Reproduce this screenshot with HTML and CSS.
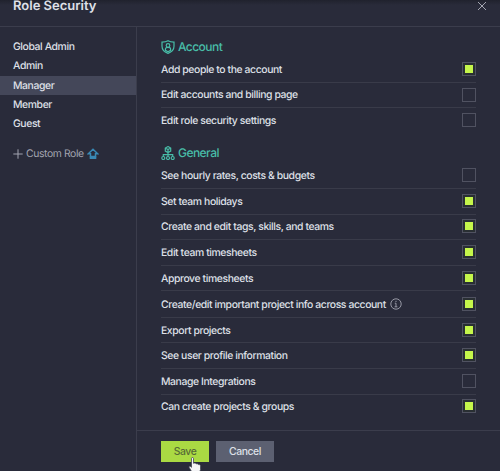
FILE: index.html
```
<!DOCTYPE html>
<html lang="en">
<head>
<meta charset="utf-8">
<title>Role Security</title>
<link rel="stylesheet" href="styles.css">
</head>
<body>
<div class="dialog">
  <header class="header">
    <h1>Role Security</h1>
    <svg class="close" viewBox="0 0 10 10"><path d="M1 1l8 8M9 1l-8 8"/></svg>
  </header>
  <div class="body">
    <nav class="sidebar">
      <div class="role">Global Admin</div>
      <div class="role">Admin</div>
      <div class="role selected">Manager</div>
      <div class="role">Member</div>
      <div class="role">Guest</div>
      <div class="custom">
        <svg class="plus" viewBox="0 0 10 10"><path d="M5 .3v9.400M.3 5h9.400"/></svg>
        <span>Custom Role</span>
        <svg class="upgrade" viewBox="0 0 12 12"><path d="M6 1.200L1.300 5.700h2.200v2.800h5V5.700h2.200z"/><path class="bar" d="M2.700 8.200h6.600V11H2.700z"/></svg>
      </div>
    </nav>
    <main class="main">
      <div class="content">
        <h2>
          <svg viewBox="0 0 14 14"><path d="M7 .8C5.200 1.800 3.200 2.100 1 2.100v4.200c0 3.300 2.400 5.800 6 7.100 3.600-1.300 6-3.800 6-7.100V2.100C10.800 2.100 8.800 1.800 7 .8z"/><circle cx="7" cy="5.500" r="1.800"/><path d="M4.400 10.300V9c0-2.200 5.200-2.200 5.200 0v1.300L7 11.700z"/></svg>
          <span>Account</span>
        </h2>
        <section>
          <div class="row"><span>Add people to the account</span><i class="box on"></i></div>
          <div class="row"><span>Edit accounts and billing page</span><i class="box"></i></div>
          <div class="row"><span>Edit role security settings</span><i class="box"></i></div>
        </section>
        <h2 class="general">
          <svg viewBox="0 0 14 14"><path d="M7 .6l2.700 1.500v3L7 6.600 4.300 5.100v-3zM4.300 2.100L7 3.600l2.700-1.500M7 3.600v7M2.300 10.500V8.700h9.400v1.800"/><circle cx="2.300" cy="12" r="1.500"/><circle cx="7" cy="12" r="1.500"/><circle cx="11.700" cy="12" r="1.500"/></svg>
          <span>General</span>
        </h2>
        <section>
          <div class="row"><span>See hourly rates, costs &amp; budgets</span><i class="box"></i></div>
          <div class="row"><span>Set team holidays</span><i class="box on"></i></div>
          <div class="row"><span>Create and edit tags, skills, and teams</span><i class="box on"></i></div>
          <div class="row"><span>Edit team timesheets</span><i class="box on"></i></div>
          <div class="row"><span>Approve timesheets</span><i class="box on"></i></div>
          <div class="row tall"><span>Create/edit important project info across account</span><svg class="info" viewBox="0 0 12 12"><circle cx="6" cy="6" r="5.200"/><path d="M4.800 5.200H6v3.600M4.600 8.800h2.800M6 2.800v1.200"/></svg><i class="box on"></i></div>
          <div class="row"><span>Export projects</span><i class="box on"></i></div>
          <div class="row"><span>See user profile information</span><i class="box on"></i></div>
          <div class="row"><span>Manage Integrations</span><i class="box"></i></div>
          <div class="row"><span>Can create projects &amp; groups</span><i class="box on"></i></div>
        </section>
      </div>
      <footer class="footer">
        <button class="save">Save</button>
        <button class="cancel">Cancel</button>
      </footer>
    </main>
  </div>
  <svg class="cursor" viewBox="0 0 14 18"><path d="M3.500 1.500c0-1.300 2-1.300 2 0v4.800c2-.6 2.300.1 2.700.6 1.300-.4 1.900 0 2.200.7 1.400-.3 2.100.4 2.100 1.500v3.400L11 17H5L1.200 10.500c-.7-1.300.8-1.900 2.300-.2z"/></svg>
</div>
</body>
</html>
```
FILE: styles.css
```
* { box-sizing: border-box; }
body {
  margin: 0;
  background: #292b3a;
  color: #dfe0e8;
  font: 500 10.4px/14px Inter, "Liberation Sans", sans-serif;
  letter-spacing: -.4px;
  text-rendering: geometricPrecision;
}
svg { display: block; fill: none; stroke: currentColor; flex: none; }
.dialog {
  position: relative;
  height: 471px;
  overflow: hidden;
  display: flex;
  flex-direction: column;
  background: linear-gradient(#20222d, #292b3a 5px);
}
.header {
  height: 27px;
  flex: none;
  display: flex;
  justify-content: space-between;
  padding: 0 13px;
  border-bottom: 1px solid #3b3d4c;
}
h1 {
  margin: 0;
  font-size: 13px;
  line-height: 13px;
  font-weight: 600;
  letter-spacing: 0;
}
.close { width: 10px; height: 10px; margin-top: 1px; color: #a4a6b1; }
.body { flex: 1; display: flex; min-height: 0; }
.sidebar {
  width: 137px;
  border-right: 1px solid #3b3d4c;
  padding-top: 10px;
}
.role { height: 19.3px; line-height: 20px; padding-left: 13px; }
.selected { background: #444759; }
.custom {
  display: flex;
  align-items: center;
  margin: 14px 0 0 13px;
  font-weight: 400;
  color: #a2a4b0;
}
.plus { width: 10px; height: 10px; margin-right: 3px; }
.upgrade { width: 12px; height: 12px; margin-left: 3px; color: #3989b5; stroke-width: 1.5; }
.bar { fill: currentColor; stroke: none; }
.main { flex: 1; display: flex; flex-direction: column; }
.content { flex: 1; padding: 12px 24px 0; }
h2 {
  display: flex;
  align-items: center;
  gap: 3px;
  height: 16px;
  margin: 0 0 2px;
  font-size: 12px;
  font-weight: 450;
  letter-spacing: -.55px;
  color: #48bda8;
}
h2 svg { width: 14px; height: 14px; stroke-width: 1.2; }
.general { margin-top: 11.6px; }
.row {
  display: flex;
  align-items: center;
  height: 25.6px;
  border-bottom: 1px solid #393b49;
}
.row:last-child { border-bottom-color: transparent; }
.row span { padding-top: 1px; }
.tall { height: 26.400px; }
.box {
  width: 14px;
  height: 14px;
  margin-left: auto;
  border: 1px solid #505261;
}
.general + section .box { margin-bottom: 1px; }
.on {
  background: #c5f64b content-box;
  padding: 2px;
  box-shadow: inset 0 0 0 2px #292f33;
}
.info { width: 12px; height: 12px; margin-left: 4px; color: #9698a4; }
.footer {
  height: 41px;
  display: flex;
  gap: 7px;
  padding: 10px 24px 0;
  border-top: 1px solid #3b3d4c;
}
button {
  height: 21px;
  padding: 0;
  border: 0;
  font: inherit;
  letter-spacing: inherit;
}
.save { width: 48px; background: #aada43; color: #566a36; }
.cancel { width: 58px; background: #5c6071; color: #dfe0e8; }
.cursor {
  position: absolute;
  left: 188px;
  top: 457px;
  width: 14px;
  height: 18px;
  fill: #f4f4f6;
  stroke: #444754;
  stroke-width: .8;
}
```
